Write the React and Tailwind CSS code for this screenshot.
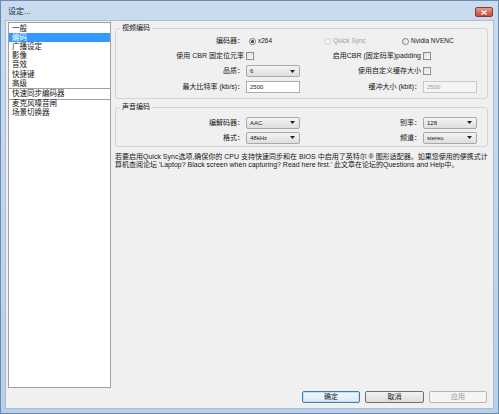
import React from "react";

const F = "font-['Liberation_Sans','Noto_Sans_CJK_SC',sans-serif]";

function Radio({ checked, disabled }) {
  return (
    <span
      className={
        disabled
          ? "flex h-[7px] w-[7px] shrink-0 items-center justify-center rounded-full border border-[#cfcfcf] bg-[#f4f4f4]"
          : "flex h-[7px] w-[7px] shrink-0 items-center justify-center rounded-full border border-[#7d7d7d] bg-gradient-to-br from-[#dadada] to-[#ffffff]"
      }
    >
      {checked && <span className="h-[3px] w-[3px] rounded-full bg-[#24415f]" />}
    </span>
  );
}

function Check() {
  return <span className="block h-[8px] w-[8px] shrink-0 border border-[#8e8f8f] bg-gradient-to-br from-[#dedede] to-[#fbfbfb]" />;
}

function Select({ value }) {
  return (
    <div className="flex h-[12px] w-[54px] items-center justify-between rounded-[2px] border border-[#a9a9a9] bg-gradient-to-b from-[#f4f4f4] to-[#dedede] pl-[3px] pr-[4px] text-[6px] leading-none text-[#222]">
      <span>{value}</span>
      <svg width="5" height="3" viewBox="0 0 5 3">
        <path d="M0 0H5L2.5 3Z" fill="#222" />
      </svg>
    </div>
  );
}

function Input({ value, disabled }) {
  return (
    <div
      className={
        disabled
          ? "flex h-[12px] w-[54px] items-center border border-[#c9c9c9] bg-[#f4f4f4] pl-[3px] text-[6px] leading-none text-[#9a9a9a]"
          : "flex h-[12px] w-[54px] items-center border border-[#abadb3] bg-white pl-[3px] text-[6px] leading-none text-[#222]"
      }
    >
      {value}
    </div>
  );
}

function Row({ h, label, c1, label2, c2 }) {
  return (
    <div className={`flex items-center ${h}`}>
      <div className="w-[128px] text-right">{label}</div>
      <div className="ml-[2px] flex w-[54px] items-center">{c1}</div>
      <div className="w-[121px] text-right">{label2}</div>
      <div className="ml-[2px] flex items-center">{c2}</div>
    </div>
  );
}

function Group({ title, children, className }) {
  return (
    <div className={`relative rounded-[3px] border border-[#d5d5d5] ${className}`}>
      <span className="absolute left-[4px] top-[-5px] bg-[#f0f0f0] px-[2px] leading-[8px]">{title}</span>
      {children}
    </div>
  );
}

const items = ["一般", "编码", "广播设定", "影像", "音效", "快捷键", "高级"];

export default function App() {
  return (
    <div className={`${F} flex h-[414px] w-[499px] flex-col border border-[#6b8bb2] bg-gradient-to-b from-[#c9dbef] to-[#b9cfe8] text-[7px] leading-[8px] text-[#161616]`}>
      {/* Title bar */}
      <div className="flex h-[19px] shrink-0 items-center pl-[7px] pr-[5px] pt-[3px]">
        <span className="text-[8px] text-[#1b2b3c]">设定...</span>
        <div className="ml-auto flex h-[10px] w-[18px] items-center justify-center rounded-[2px] border border-[#8d3a2e] bg-gradient-to-b from-[#e39a8c] to-[#c4483a]">
          <svg width="6" height="5" viewBox="0 0 6 5">
            <path d="M0.5 0.5L5.5 4.5M5.5 0.5L0.5 4.5" stroke="#fff" strokeWidth="1.3" />
          </svg>
        </div>
      </div>

      {/* Body */}
      <div className="mx-[4px] mb-[4px] flex flex-1 border border-[#a8bdd6] bg-[#f0f0f0]">
        {/* Sidebar */}
        <div className="ml-[2px] mt-[1px] h-[366px] w-[103px] border border-[#a0a0a0] bg-white pt-[1px] text-[7.5px]">
          {items.map((t, i) => (
            <div
              key={t}
              className={
                i === 1
                  ? "flex h-[9.2px] items-center bg-[#3399ff] pl-[3px] text-white"
                  : "flex h-[9.2px] items-center pl-[3px]"
              }
            >
              {t}
            </div>
          ))}
          <div className="flex h-[11.2px] items-center border-y border-[#a0a0a0] pl-[3px]">快速同步编码器</div>
          <div className="flex h-[9.2px] items-center pl-[3px]">麦克风噪音闸</div>
          <div className="flex h-[9.2px] items-center pl-[3px]">场景切换器</div>
        </div>

        {/* Right column */}
        <div className="ml-[4px] flex w-[373px] flex-col">
          <Group title="视频编码" className="mt-[7px] pb-[3px] pt-[5px]">
            <div className="flex h-[14px] items-center">
              <div className="w-[128px] text-right">编码器：</div>
              <div className="ml-[2px] flex w-[78px] items-center pl-[3px]">
                <Radio checked />
                <span className="ml-[2px] text-[6.5px]">x264</span>
              </div>
              <div className="flex w-[78px] items-center">
                <Radio disabled />
                <span className="ml-[2px] text-[6.5px] text-[#a0a0a0]">Quick Sync</span>
              </div>
              <div className="flex items-center">
                <Radio />
                <span className="ml-[2px] text-[6.5px]">Nvidia NVENC</span>
              </div>
            </div>
            <Row h="h-[15px]" label="使用 CBR 固定位元率" c1={<Check />} label2="启用CBR (固定码率)padding" c2={<Check />} />
            <Row h="h-[16px]" label="品质：" c1={<Select value="6" />} label2="使用自定义缓存大小" c2={<Check />} />
            <Row h="h-[16px]" label="最大比特率 (kb/s)：" c1={<Input value="2500" />} label2="缓冲大小 (kbit)：" c2={<Input value="2500" disabled />} />
          </Group>

          <Group title="声音编码" className="mt-[8px] pb-[1px] pt-[7px]">
            <Row h="h-[15px]" label="编解码器：" c1={<Select value="AAC" />} label2="别率：" c2={<Select value="128" />} />
            <Row h="h-[15px]" label="格式：" c1={<Select value="48kHz" />} label2="频道：" c2={<Select value="stereo" />} />
          </Group>

          <p className="mt-[6px] leading-[8px]">
            若要启用Quick Sync选项,确保你的 CPU 支持快速同步和在 BIOS 中启用了英特尔 ® 图形适配器。如果您使用的便携式计
            <br />
            算机查阅论坛 'Laptop? Black screen when capturing? Read here first.' 此文章在论坛的Questions and Help中。
          </p>

          <div className="mb-[5px] mr-[1px] mt-auto flex justify-end gap-[5px]">
            <button className="flex h-[12px] w-[58px] items-center justify-center rounded-[2px] border border-[#3c7fb1] bg-gradient-to-b from-[#f2f8fd] to-[#dbe9f6] text-[7px] shadow-[inset_0_0_0_1px_#bfe0f7]">
              确定
            </button>
            <button className="flex h-[12px] w-[59px] items-center justify-center rounded-[2px] border border-[#707070] bg-gradient-to-b from-[#f2f2f2] to-[#dcdcdc] text-[7px]">
              取消
            </button>
            <button className="flex h-[12px] w-[58px] items-center justify-center rounded-[2px] border border-[#b5b5b5] bg-[#f4f4f4] text-[7px] text-[#9a9a9a]">
              应用
            </button>
          </div>
        </div>
      </div>
    </div>
  );
}
